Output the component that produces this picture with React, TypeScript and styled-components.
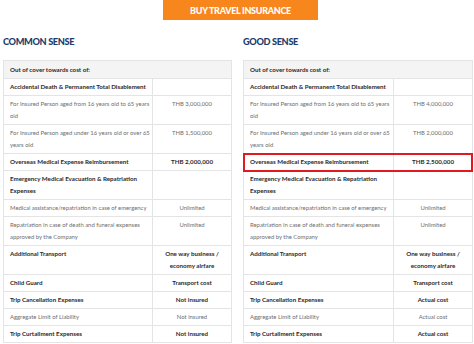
import styled, { createGlobalStyle } from "styled-components";

const GlobalStyle = createGlobalStyle`
  html, body {
    margin: 0;
    padding: 0;
    background: #ffffff;
  }
  body {
    font-family: Lato, "Open Sans", sans-serif;
    overflow: hidden;
  }
`;

const Page = styled.div`
  width: 474px;
  height: 344px;
  overflow: hidden;
`;

const TopBar = styled.div`
  display: flex;
  justify-content: center;
  padding-left: 7px;
`;

const BuyButton = styled.button`
  width: 155px;
  height: 20px;
  border: none;
  margin: 0;
  padding: 0;
  background: #f7861c;
  color: #ffffff;
  font-family: Lato, sans-serif;
  font-weight: 900;
  font-size: 9px;
  letter-spacing: -0.3px;
  cursor: pointer;
`;

const Columns = styled.div`
  display: grid;
  grid-template-columns: 229px 230px;
  column-gap: 11px;
  padding-left: 3px;
`;

const Column = styled.section`
  display: flex;
  flex-direction: column;
`;

const Heading = styled.h2`
  margin: 14px 0 10px;
  line-height: 16px;
  font-size: 9.2px;
  font-weight: 900;
  letter-spacing: -0.35px;
  color: #1d3c6e;
`;

const Table = styled.div`
  border: 1px solid #e4e4e4;
  border-bottom: none;
`;

const Row = styled.div<{ $head?: boolean; $highlight?: boolean; $labelWidth: number }>`
  display: grid;
  grid-template-columns: ${(p) => (p.$head ? "1fr" : `${p.$labelWidth}px 1fr`)};
  border-bottom: 1px solid #e4e4e4;
  background: ${(p) => (p.$head ? "#f4f4f4" : "#ffffff")};
  position: relative;
  ${(p) =>
    p.$highlight &&
    `
    outline: 2px solid #e2191f;
    outline-offset: -1px;
    z-index: 1;
  `}
`;

const Cell = styled.div<{ $bold?: boolean; $value?: boolean; $head?: boolean }>`
  padding: ${(p) => (p.$head ? "3px 6px 2px" : "2px 6px")};
  line-height: 12px;
  font-size: ${(p) => (p.$bold ? "6.2px" : "5.9px")};
  font-weight: ${(p) => (p.$bold ? 700 : 400)};
  color: ${(p) => (p.$bold ? "#2a2a2a" : "#6e6e6e")};
  text-align: ${(p) => (p.$value ? "center" : "left")};
  border-right: ${(p) => (p.$value || p.$head ? "none" : "1px solid #e4e4e4")};
  white-space: nowrap;
`;

type Item = {
  label: string[];
  value: string[];
  bold?: boolean;
  valueBold?: boolean;
  highlight?: boolean;
};

const labels: { label: string[]; bold?: boolean }[] = [
  { label: ["Accidental Death & Permanent Total Disablement"], bold: true },
  { label: ["For Insured Person aged from 16 years old to 65 years", "old"] },
  { label: ["For Insured Person aged under 16 years old or over 65", "years old"] },
  { label: ["Overseas Medical Expense Reimbursement"], bold: true },
  { label: ["Emergency Medical Evacuation & Repatriation", "Expenses"], bold: true },
  { label: ["Medical assistance/repatriation in case of emergency"] },
  { label: ["Repatriation in case of death and funeral expenses", "approved by the Company"] },
  { label: ["Additional Transport"], bold: true },
  { label: ["Child Guard"], bold: true },
  { label: ["Trip Cancellation Expenses"], bold: true },
  { label: ["Aggregate Limit of Liability"] },
  { label: ["Trip Curtailment Expenses"], bold: true },
];

const build = (values: [string[], boolean][], highlight?: number): Item[] =>
  labels.map((l, i) => ({
    ...l,
    value: values[i][0],
    valueBold: values[i][1],
    highlight: i === highlight,
  }));

const common = build([
  [[""], false],
  [["THB 3,000,000"], false],
  [["THB 1,500,000"], false],
  [["THB 2,000,000"], true],
  [[""], false],
  [["Unlimited"], false],
  [["Unlimited"], false],
  [["One way business /", "economy airfare"], true],
  [["Transport cost"], true],
  [["Not insured"], true],
  [["Not insured"], false],
  [["Not insured"], true],
]);

const good = build(
  [
    [[""], false],
    [["THB 4,000,000"], false],
    [["THB 2,000,000"], false],
    [["THB 2,500,000"], true],
    [[""], false],
    [["Unlimited"], false],
    [["Unlimited"], false],
    [["One way business /", "economy airfare"], true],
    [["Transport cost"], true],
    [["Actual cost"], true],
    [["Actual cost"], false],
    [["Actual cost"], true],
  ],
  3
);

function Lines({ lines }: { lines: string[] }) {
  return (
    <>
      {lines.map((line, i) => (
        <span key={i}>
          {i > 0 && <br />}
          {line || "\u00a0"}
        </span>
      ))}
    </>
  );
}

function CoverTable({ title, items, labelWidth }: { title: string; items: Item[]; labelWidth: number }) {
  return (
    <Column>
      <Heading>{title}</Heading>
      <Table>
        <Row $head $labelWidth={labelWidth}>
          <Cell $head $bold>
            Out of cover towards cost of:
          </Cell>
        </Row>
        {items.map((item, i) => (
          <Row key={i} $highlight={item.highlight} $labelWidth={labelWidth}>
            <Cell $bold={item.bold}>
              <Lines lines={item.label} />
            </Cell>
            <Cell $value $bold={item.valueBold}>
              <Lines lines={item.value} />
            </Cell>
          </Row>
        ))}
      </Table>
    </Column>
  );
}

export default function App() {
  return (
    <>
      <GlobalStyle />
      <Page>
        <TopBar>
          <BuyButton>BUY TRAVEL INSURANCE</BuyButton>
        </TopBar>
        <Columns>
          <CoverTable title="COMMON SENSE" items={common} labelWidth={149} />
          <CoverTable title="GOOD SENSE" items={good} labelWidth={150} />
        </Columns>
      </Page>
    </>
  );
}
